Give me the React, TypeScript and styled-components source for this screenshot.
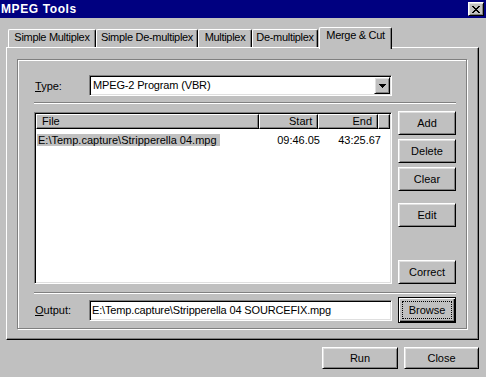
import React from "react";
import styled, { createGlobalStyle, css } from "styled-components";

const GlobalStyle = createGlobalStyle`
  html, body { margin: 0; padding: 0; background: #c0c0c0; }
  body {
    font-family: "Liberation Sans", Arial, sans-serif;
    font-size: 11px;
    color: #000;
  }
  * { box-sizing: border-box; }
`;

const raised = css`
  border: 1px solid;
  border-color: #fff #000 #000 #fff;
  box-shadow: inset 1px 1px #dfdfdf, inset -1px -1px #808080;
`;

const sunken = css`
  border: 1px solid;
  border-color: #808080 #fff #fff #808080;
  box-shadow: inset 1px 1px #000, inset -1px -1px #dfdfdf;
`;

const Window = styled.div`
  width: 486px;
  height: 377px;
  background: #c0c0c0;
  display: flex;
  flex-direction: column;
  overflow: hidden;
`;

const TitleBar = styled.div`
  height: 18px;
  flex: none;
  background: #000080;
  display: flex;
  align-items: center;
  justify-content: space-between;
  padding: 0 2px 0 1px;
`;

const Title = styled.span`
  color: #fff;
  font-weight: bold;
  font-size: 12px;
  letter-spacing: 0.6px;
`;

const TitleButton = styled.div`
  width: 16px;
  height: 14px;
  background: #c0c0c0;
  ${raised};
  display: flex;
  align-items: center;
  justify-content: center;
`;

const Body = styled.div`
  flex: 1;
  display: flex;
  flex-direction: column;
  padding: 9px 7px 0 6px;
`;

const TabStrip = styled.div`
  height: 20px;
  flex: none;
  display: flex;
  align-items: flex-end;
  padding-left: 2px;
`;

const Tab = styled.div<{ $w: number; $active?: boolean }>`
  width: ${(p) => p.$w}px;
  height: ${(p) => (p.$active ? 22 : 18)}px;
  margin-bottom: ${(p) => (p.$active ? -2 : 0)}px;
  margin-left: ${(p) => (p.$active ? 1 : 0)}px;
  position: relative;
  z-index: ${(p) => (p.$active ? 2 : 1)};
  background: #c0c0c0;
  border-left: 1px solid #fff;
  border-top: 1px solid #fff;
  border-right: 1px solid #000;
  border-top-left-radius: 2px;
  border-top-right-radius: 2px;
  box-shadow: inset -1px 0 #808080;
  text-align: center;
  line-height: 13px;
  padding-top: 1px;
  letter-spacing: -0.3px;
  white-space: nowrap;
`;

const TabPanel = styled.div`
  height: 293px;
  flex: none;
  display: flex;
  border: 1px solid;
  border-color: #fff #000 #000 #fff;
  box-shadow: inset -1px -1px #808080;
  padding: 11px 11px 10px 10px;
`;

const Group = styled.div`
  flex: 1;
  display: flex;
  flex-direction: column;
  border: 1px solid #808080;
  box-shadow: inset 1px 1px #fff, 1px 1px #fff;
  padding: 15px 10px 5px 16px;
`;

const FieldRow = styled.div<{ $h: number; $mt?: number }>`
  height: ${(p) => p.$h}px;
  margin-top: ${(p) => p.$mt ?? 0}px;
  flex: none;
  display: flex;
  align-items: center;
`;

const Label = styled.div`
  width: 55px;
  padding-left: 1px;
  white-space: nowrap;
`;

const Combo = styled.div`
  width: 303px;
  height: 21px;
  background: #fff;
  ${sunken};
  display: flex;
  padding: 1px;
`;

const FieldText = styled.div<{ $pad: number }>`
  flex: 1;
  padding-left: ${(p) => p.$pad}px;
  line-height: 17px;
  white-space: nowrap;
  overflow: hidden;
  letter-spacing: -0.15px;
`;

const DropButton = styled.div`
  width: 16px;
  height: 17px;
  background: #c0c0c0;
  ${raised};
  display: flex;
  align-items: center;
  justify-content: center;
`;

const TextField = styled.div`
  width: 303px;
  height: 21px;
  background: #fff;
  ${sunken};
  display: flex;
  padding: 1px;
`;

const Separator = styled.div<{ $mt: number }>`
  height: 2px;
  flex: none;
  margin-top: ${(p) => p.$mt}px;
  border-top: 1px solid #808080;
  border-bottom: 1px solid #fff;
`;

const ListRow = styled.div`
  height: 173px;
  flex: none;
  margin-top: 7px;
  display: flex;
  gap: 6px;
`;

const ListView = styled.div`
  width: 358px;
  height: 172px;
  margin-top: 1px;
  background: #fff;
  ${sunken};
  padding: 1px;
  display: flex;
  flex-direction: column;
`;

const HeaderRow = styled.div`
  height: 15px;
  flex: none;
  display: flex;
`;

const HeaderCell = styled.div<{ $w?: number; $right?: boolean }>`
  ${(p) => (p.$w ? `width: ${p.$w}px;` : "flex: 1;")}
  background: #c0c0c0;
  ${raised};
  box-shadow: inset -1px -1px #808080;
  line-height: 13px;
  padding: 0 5px;
  text-align: ${(p) => (p.$right ? "right" : "left")};
  white-space: nowrap;
`;

const DataRow = styled.div`
  height: 12px;
  margin-top: 5px;
  display: flex;
  line-height: 12px;
`;

const DataCell = styled.div<{ $w: number; $right?: boolean }>`
  width: ${(p) => p.$w}px;
  padding: 0 5px 0 1px;
  text-align: ${(p) => (p.$right ? "right" : "left")};
  white-space: nowrap;
`;

const Selection = styled.span`
  display: inline-block;
  background: #c0c0c0;
  padding: 0 3px 0 1px;
`;

const ButtonColumn = styled.div`
  width: 58px;
  display: flex;
  flex-direction: column;
`;

const Button = styled.div<{ $w?: number; $h?: number; $mt?: string }>`
  width: ${(p) => p.$w ?? 58}px;
  height: ${(p) => p.$h ?? 24}px;
  margin-top: ${(p) => p.$mt ?? "0"};
  flex: none;
  background: #c0c0c0;
  ${raised};
  display: flex;
  align-items: center;
  justify-content: center;
  white-space: nowrap;
`;

const DefaultButton = styled.div`
  width: 58px;
  height: 26px;
  margin-left: auto;
  background: #c0c0c0;
  border: 1px solid #000;
  box-shadow: inset 1px 1px #fff, inset -1px -1px #000, inset -2px -2px #808080;
  padding: 3px;
  display: flex;
`;

const FocusRect = styled.div`
  flex: 1;
  border: 1px dotted #000;
  display: flex;
  align-items: center;
  justify-content: center;
`;

const Footer = styled.div`
  display: flex;
  justify-content: flex-end;
  gap: 6px;
  margin-top: 7px;
`;

const Mnemonic = styled.span`
  text-decoration: underline;
`;

const CloseGlyph = () => (
  <svg width="8" height="7" viewBox="0 0 8 7" shapeRendering="crispEdges">
    {[0, 1, 2, 3, 4, 5, 6].map((i) => (
      <React.Fragment key={i}>
        <rect x={i} y={i} width={2} height={1} fill="#000" />
        <rect x={6 - i} y={i} width={2} height={1} fill="#000" />
      </React.Fragment>
    ))}
  </svg>
);

const DownArrow = () => (
  <svg width="7" height="4" viewBox="0 0 7 4" shapeRendering="crispEdges">
    <rect x={0} y={0} width={7} height={1} fill="#000" />
    <rect x={1} y={1} width={5} height={1} fill="#000" />
    <rect x={2} y={2} width={3} height={1} fill="#000" />
    <rect x={3} y={3} width={1} height={1} fill="#000" />
  </svg>
);

const tabs = [
  { label: "Simple Multiplex", w: 88 },
  { label: "Simple De-multiplex", w: 102 },
  { label: "Multiplex", w: 54 },
  { label: "De-multiplex", w: 66 },
  { label: "Merge & Cut", w: 73, active: true },
];

export default function App() {
  return (
    <>
      <GlobalStyle />
      <Window>
        <TitleBar>
          <Title>MPEG Tools</Title>
          <TitleButton>
            <CloseGlyph />
          </TitleButton>
        </TitleBar>
        <Body>
          <TabStrip>
            {tabs.map((t) => (
              <Tab key={t.label} $w={t.w} $active={t.active}>
                {t.label}
              </Tab>
            ))}
          </TabStrip>
          <TabPanel>
            <Group>
              <FieldRow $h={21}>
                <Label>
                  <Mnemonic>T</Mnemonic>ype:
                </Label>
                <Combo>
                  <FieldText $pad={2}>MPEG-2 Program (VBR)</FieldText>
                  <DropButton>
                    <DownArrow />
                  </DropButton>
                </Combo>
              </FieldRow>
              <Separator $mt={6} />
              <ListRow>
                <ListView>
                  <HeaderRow>
                    <HeaderCell $w={229}>File</HeaderCell>
                    <HeaderCell $w={60} $right>
                      Start
                    </HeaderCell>
                    <HeaderCell $w={61} $right>
                      End
                    </HeaderCell>
                    <HeaderCell />
                  </HeaderRow>
                  <DataRow>
                    <DataCell $w={229}>
                      <Selection>E:\Temp.capture\Stripperella 04.mpg</Selection>
                    </DataCell>
                    <DataCell $w={60} $right>
                      09:46.05
                    </DataCell>
                    <DataCell $w={61} $right>
                      43:25.67
                    </DataCell>
                  </DataRow>
                </ListView>
                <ButtonColumn>
                  <Button>Add</Button>
                  <Button $mt="4px">Delete</Button>
                  <Button $mt="4px">Clear</Button>
                  <Button $mt="12px">Edit</Button>
                  <Button $mt="auto">Correct</Button>
                </ButtonColumn>
              </ListRow>
              <Separator $mt={8} />
              <FieldRow $h={26} $mt={3}>
                <Label>
                  <Mnemonic>O</Mnemonic>utput:
                </Label>
                <TextField>
                  <FieldText $pad={1}>
                    E:\Temp.capture\Stripperella 04 SOURCEFIX.mpg
                  </FieldText>
                </TextField>
                <DefaultButton>
                  <FocusRect>Browse</FocusRect>
                </DefaultButton>
              </FieldRow>
            </Group>
          </TabPanel>
          <Footer>
            <Button $w={76} $h={22}>
              Run
            </Button>
            <Button $w={75} $h={22}>
              Close
            </Button>
          </Footer>
        </Body>
      </Window>
    </>
  );
}
